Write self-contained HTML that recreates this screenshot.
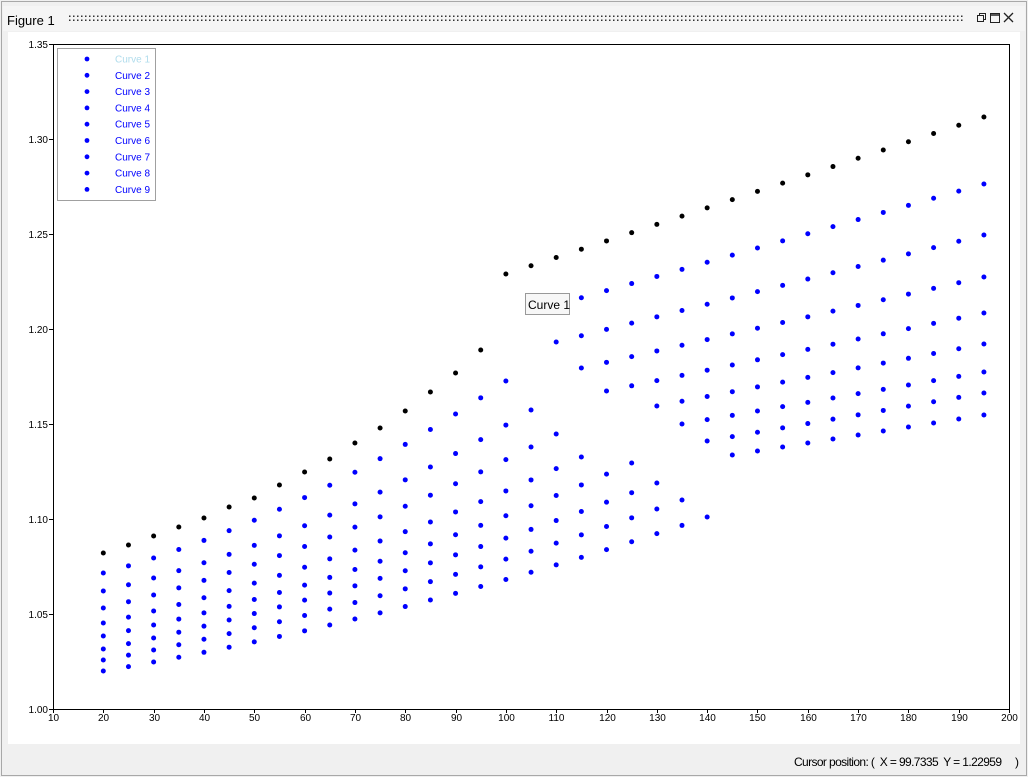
<!DOCTYPE html>
<html><head><meta charset="utf-8"><style>
html,body{margin:0;padding:0;background:#f0f0f0;}
body{width:1028px;height:777px;overflow:hidden;position:relative;font-family:"Liberation Sans",Arial,sans-serif;}
</style></head><body>
<svg id="s" width="1028" height="777" xmlns="http://www.w3.org/2000/svg" style="position:absolute;left:0;top:0">
<rect x="0" y="0" width="1028" height="777" fill="#f0f0f0"/>
<rect x="1.5" y="1.5" width="1025" height="774" fill="none" stroke="#a8a8a8"/>
<rect x="3" y="6" width="1022" height="25" fill="#f5f5f5"/>
<text x="7" y="25" font-size="13" fill="#000">Figure 1</text>
<g id="grip"></g>
<rect x="977.5" y="15.5" width="6" height="6" fill="none" stroke="#222"/>
<path d="M979.5 15.5V13.5H985.5V19.5H983.5" fill="none" stroke="#222"/>
<rect x="990.5" y="13.5" width="9" height="9" fill="none" stroke="#222"/>
<line x1="990" y1="15" x2="1000" y2="15" stroke="#222" stroke-width="1.5"/>
<path d="M1004 13L1013 22M1013 13L1004 22" stroke="#222" stroke-width="1.3"/>
<rect x="8" y="32" width="1012" height="712" fill="#fff"/>
<rect x="53.5" y="44.5" width="956" height="665" fill="none" stroke="#000"/>
<g id="ax" font-size="10" fill="#000"></g>
<rect x="57.5" y="48.5" width="98" height="152" fill="#fff" stroke="#a0a0a0"/>
<g id="leg" font-size="10"></g>
<g id="dots"></g>
<rect x="525.5" y="293.5" width="44" height="21" fill="#f7f7f7" stroke="#999"/>
<text x="528" y="309" font-size="12" fill="#000">Curve 1</text>
<text x="794" y="766" font-size="12" fill="#000" style="white-space:pre" textLength="225" lengthAdjust="spacing">Cursor position: (  X = 99.7335  Y = 1.22959     )</text>
</svg>
<script>
var NS="http://www.w3.org/2000/svg";
function el(p,t,a,txt){var e=document.createElementNS(NS,t);for(var k in a)e.setAttribute(k,a[k]);if(txt)e.textContent=txt;p.appendChild(e);return e;}
var g=document.getElementById('grip');
for(var x=69;x<962;x+=4){el(g,'rect',{x:x,y:15.5,width:1.5,height:1.5,fill:'#333'});el(g,'rect',{x:x,y:19.5,width:1.5,height:1.5,fill:'#333'});}
var ax=document.getElementById('ax');
function px(x){return 53+(x-10)*5.032;}
for(var i=0;i<=7;i++){var v=1+i*0.05,y=709-i*95;
 el(ax,'line',{x1:49,x2:53,y1:y+0.5,y2:y+0.5,stroke:'#000'});
 el(ax,'text',{x:48,y:y+4,'text-anchor':'end'},v.toFixed(2));}
for(var v=10;v<=200;v+=10){var x=Math.round(px(v))+0.5;
 el(ax,'line',{x1:x,x2:x,y1:709,y2:713,stroke:'#000'});
 el(ax,'text',{x:x,y:721,'text-anchor':'middle'},String(v));}
var lg=document.getElementById('leg');
for(var i=0;i<9;i++){var y=59+i*16.3;
 el(lg,'circle',{cx:87,cy:y,r:2.4,fill:'#0000ff'});
 el(lg,'text',{x:115,y:y+3.5,fill:i==0?'#b0dcec':'#0000ff'},'Curve '+(i+1));}
var d=document.getElementById('dots');
function dot(x,y,c){el(d,'circle',{cx:px(x),cy:y,r:2.5,fill:c});}
var bl=[553,545,536,527,518,507,498,485,472,459,443,428,411,392,373,350];
for(var i=0;i<bl.length;i++)dot(20+5*i,bl[i],'#000');
for(var x=100;x<=195;x+=5)dot(x,274-(x-100)*1.653,'#000');
var L=[[573,558,80,381],[591,578,85,410],[608,595,90,434],[623,611,95,457],[636,625,105,463],[649,638,110,483],[660,650,115,500],[671,662,120,517]];
for(var k=0;k<8;k++){var a=L[k][0],y10=L[k][1],T=L[k][2],yT=L[k][3];
 var p=y10-a,q=yT-a;var c=(q-p*T/10)/(T*T-10*T);var b=(p-100*c)/10;
 for(var t=0;t<=T;t+=5)dot(20+t,a+b*t+c*t*t,'#0000ff');}
var R=[[105,312,184],[110,342,235],[115,368,277],[120,391,313],[130,406,344],[135,424,372],[140,441,393],[145,455,415]];
for(var k=0;k<8;k++){var s=R[k][0],y0=R[k][1],y1=R[k][2];
 for(var x=s;x<=195;x+=5)dot(x,y0+(y1-y0)*(x-s)/(195-s),'#0000ff');}
(function(){var s=document.getElementById('s');var r=[].slice.call(s.children).filter(function(e){return (e.tagName=='rect'&&e.getAttribute('x')=='525.5')||(e.tagName=='text'&&e.getAttribute('x')=='528');});r.forEach(function(e){s.appendChild(e);});})();
</script>
</body></html>
